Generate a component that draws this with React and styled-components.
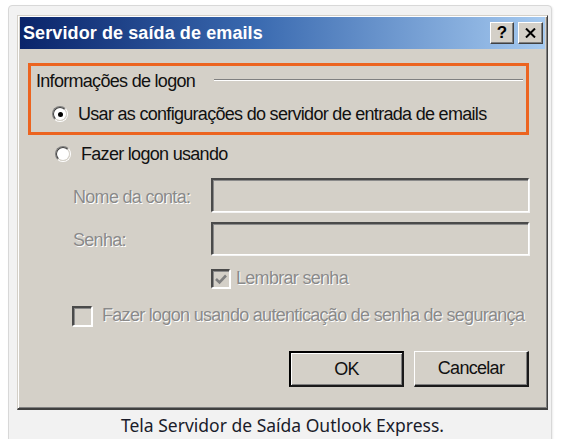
import React from "react";
import styled, { createGlobalStyle } from "styled-components";

const Global = createGlobalStyle`
  html, body { margin: 0; padding: 0; background: #ffffff; }
  body { font-family: "Liberation Sans", Arial, sans-serif; }
`;

const Frame = styled.div`
  margin: 5px 0 0 8px;
  width: 544px;
  min-height: 450px;
  box-sizing: border-box;
  background: #f2f2f2;
  border: 1px solid #d8d8d8;
  border-radius: 4px;
  box-shadow: 1px 1px 2px rgba(0, 0, 0, 0.08);
  padding: 9px 3px 0 8px;
`;

const Dialog = styled.div`
  width: 531px;
  box-sizing: border-box;
  background: #d4d0c8;
  border-top: 1px solid #d4d0c8;
  border-left: 1px solid #d4d0c8;
  border-right: 1px solid #404040;
  border-bottom: 2px solid #404040;
  box-shadow: inset 1px 1px 0 #ffffff, inset -1px -1px 0 #808080;
  padding: 1px 2px 1px 1px;
  display: flex;
  flex-direction: column;
`;

const TitleBar = styled.div`
  height: 32px;
  margin-left: 1px;
  background: linear-gradient(to right, #0a246a 0%, #3a6ab0 45%, #a6caf0 100%);
  display: flex;
  align-items: center;
  justify-content: space-between;
  padding: 0 2px 0 3px;
`;

const Title = styled.span`
  color: #ffffff;
  font-family: "Liberation Sans", Arial, sans-serif;
  font-weight: bold;
  font-size: 18px;
  letter-spacing: 0.1px;
`;

const TitleButtons = styled.div`
  display: flex;
  gap: 4px;
`;

const TitleButton = styled.div`
  width: ${(p) => p.$w}px;
  height: 22px;
  box-sizing: border-box;
  background: #d4d0c8;
  border-top: 1px solid #ffffff;
  border-left: 1px solid #ffffff;
  border-right: 1px solid #404040;
  border-bottom: 1px solid #404040;
  box-shadow: inset -1px -1px 0 #808080;
  display: flex;
  align-items: center;
  justify-content: center;
  font-family: "Liberation Sans", Arial, sans-serif;
  font-weight: bold;
  font-size: 17px;
  color: #000;
`;

const Body = styled.div`
  padding: 14px 16px 20px 9px;
  display: flex;
  flex-direction: column;
`;

const Highlight = styled.div`
  height: 72px;
  box-sizing: border-box;
  border: 3px solid #ec6420;
  display: flex;
  flex-direction: column;
`;

const GroupHeader = styled.div`
  height: 30px;
  display: flex;
  align-items: center;
  padding: 0 3px 0 5px;
  gap: 19px;
`;

const GroupLine = styled.div`
  flex: 1;
  height: 1px;
  background: #808080;
  border-bottom: 1px solid #ffffff;
  margin-top: -2px;
`;

const Text = styled.span`
  font-family: "Liberation Sans", Arial, sans-serif;
  font-size: 18px;
  letter-spacing: -0.7px;
  white-space: nowrap;
  color: ${(p) => (p.$disabled ? "#8a8a8a" : "#111")};
  text-shadow: ${(p) => (p.$disabled ? "1px 1px 0 #ffffff" : "none")};
`;

const OptionRow = styled.div`
  height: ${(p) => p.$h}px;
  display: flex;
  align-items: center;
  padding-left: ${(p) => p.$indent}px;
  gap: 10px;
`;

const RadioOuter = styled.span`
  width: 16px;
  height: 16px;
  box-sizing: border-box;
  border-radius: 50%;
  border: 1px solid;
  border-color: #808080 #ffffff #ffffff #808080;
  display: flex;
  flex: none;
`;

const RadioInner = styled.span`
  flex: 1;
  border-radius: 50%;
  border: 1px solid;
  border-color: #404040 #d4d0c8 #d4d0c8 #404040;
  background: #ffffff;
  display: flex;
  align-items: center;
  justify-content: center;
`;

const RadioDot = styled.span`
  width: 5px;
  height: 5px;
  border-radius: 50%;
  background: #000;
`;

const FieldRow = styled.div`
  margin-top: ${(p) => p.$mt}px;
  height: ${(p) => p.$h}px;
  display: flex;
  align-items: center;
  padding-left: 45px;
`;

const FieldLabel = styled.div`
  width: 138px;
  flex: none;
  padding-top: 4px;
`;

const Input = styled.div`
  flex: 1;
  align-self: stretch;
  box-sizing: border-box;
  background: #d4d0c8;
  border-top: 2px solid #4a4a4a;
  border-left: 2px solid #4a4a4a;
  border-right: 1px solid #ffffff;
  border-bottom: 1px solid #ffffff;
  box-shadow: inset 1px 1px 0 #8a8a8a, 1px 1px 0 #f4f4f4;
`;

const CheckRow = styled.div`
  margin-top: ${(p) => p.$mt}px;
  display: flex;
  align-items: center;
  padding-left: ${(p) => p.$indent}px;
  gap: ${(p) => p.$gap}px;
`;

const CheckBox = styled.span`
  width: ${(p) => p.$size}px;
  height: ${(p) => p.$size}px;
  box-sizing: border-box;
  flex: none;
  background: #d4d0c8;
  border-top: 2px solid #4a4a4a;
  border-left: 2px solid #4a4a4a;
  border-right: 1px solid #ffffff;
  border-bottom: 1px solid #ffffff;
  box-shadow: inset 1px 1px 0 #8a8a8a, 1px 1px 0 #ffffff;
  display: flex;
  align-items: center;
  justify-content: center;
`;

const ButtonRow = styled.div`
  margin-top: 25px;
  display: flex;
  justify-content: flex-end;
  gap: 10px;
`;

const Button = styled.div`
  width: 115px;
  height: 36px;
  box-sizing: border-box;
  background: #d4d0c8;
  border: ${(p) => (p.$default ? "2px" : "1px")} solid ${(p) => (p.$default ? "#000" : "#ffffff")};
  border-right: 2px solid #1a1a1a;
  border-bottom: 2px solid #1a1a1a;
  box-shadow: ${(p) =>
    p.$default
      ? "inset 1px 1px 0 #ffffff, inset -1px -1px 0 #808080"
      : "inset -1px -1px 0 #808080"};
  display: flex;
  align-items: center;
  justify-content: center;
`;

const ButtonText = styled.span`
  font-family: "Liberation Sans", Arial, sans-serif;
  font-size: 18px;
  letter-spacing: -0.7px;
  color: #111;
`;

const Caption = styled.div`
  width: 531px;
  text-align: center;
  margin-top: 3px;
  font-family: "Noto Sans", "Open Sans", sans-serif;
  font-size: 17.5px;
  line-height: 24px;
  color: #1a1c2a;
`;

function Radio({ checked }) {
  return (
    <RadioOuter>
      <RadioInner>{checked && <RadioDot />}</RadioInner>
    </RadioOuter>
  );
}

export default function App() {
  return (
    <>
      <Global />
      <Frame>
        <Dialog>
          <TitleBar>
            <Title>Servidor de saída de emails</Title>
            <TitleButtons>
              <TitleButton $w={24}>?</TitleButton>
              <TitleButton $w={25}>
                <svg width="11" height="10" viewBox="0 0 11 10">
                  <path d="M1 0.5 L10 9.5 M10 0.5 L1 9.5" stroke="#000" strokeWidth="2" />
                </svg>
              </TitleButton>
            </TitleButtons>
          </TitleBar>
          <Body>
            <Highlight>
              <GroupHeader>
                <Text>Informações de logon</Text>
                <GroupLine />
              </GroupHeader>
              <OptionRow $h={36} $indent={21}>
                <Radio checked />
                <Text>Usar as configurações do servidor de entrada de emails</Text>
              </OptionRow>
            </Highlight>
            <OptionRow $h={38} $indent={27}>
              <Radio />
              <Text>Fazer logon usando</Text>
            </OptionRow>
            <FieldRow $mt={5} $h={34}>
              <FieldLabel>
                <Text $disabled>Nome da conta:</Text>
              </FieldLabel>
              <Input />
            </FieldRow>
            <FieldRow $mt={10} $h={33}>
              <FieldLabel>
                <Text $disabled>Senha:</Text>
              </FieldLabel>
              <Input />
            </FieldRow>
            <CheckRow $mt={13} $indent={183} $gap={6}>
              <CheckBox $size={19}>
                <svg width="12" height="11" viewBox="0 0 12 11">
                  <path d="M1 5 L4.5 8.5 L11 1.5" stroke="#808080" strokeWidth="2.6" fill="none" />
                </svg>
              </CheckBox>
              <Text $disabled>Lembrar senha</Text>
            </CheckRow>
            <CheckRow $mt={16} $indent={44} $gap={10}>
              <CheckBox $size={20} />
              <Text $disabled>Fazer logon usando autenticação de senha de segurança</Text>
            </CheckRow>
            <ButtonRow>
              <Button $default>
                <ButtonText>OK</ButtonText>
              </Button>
              <Button>
                <ButtonText>Cancelar</ButtonText>
              </Button>
            </ButtonRow>
          </Body>
        </Dialog>
        <Caption>Tela Servidor de Saída Outlook Express.</Caption>
      </Frame>
    </>
  );
}
